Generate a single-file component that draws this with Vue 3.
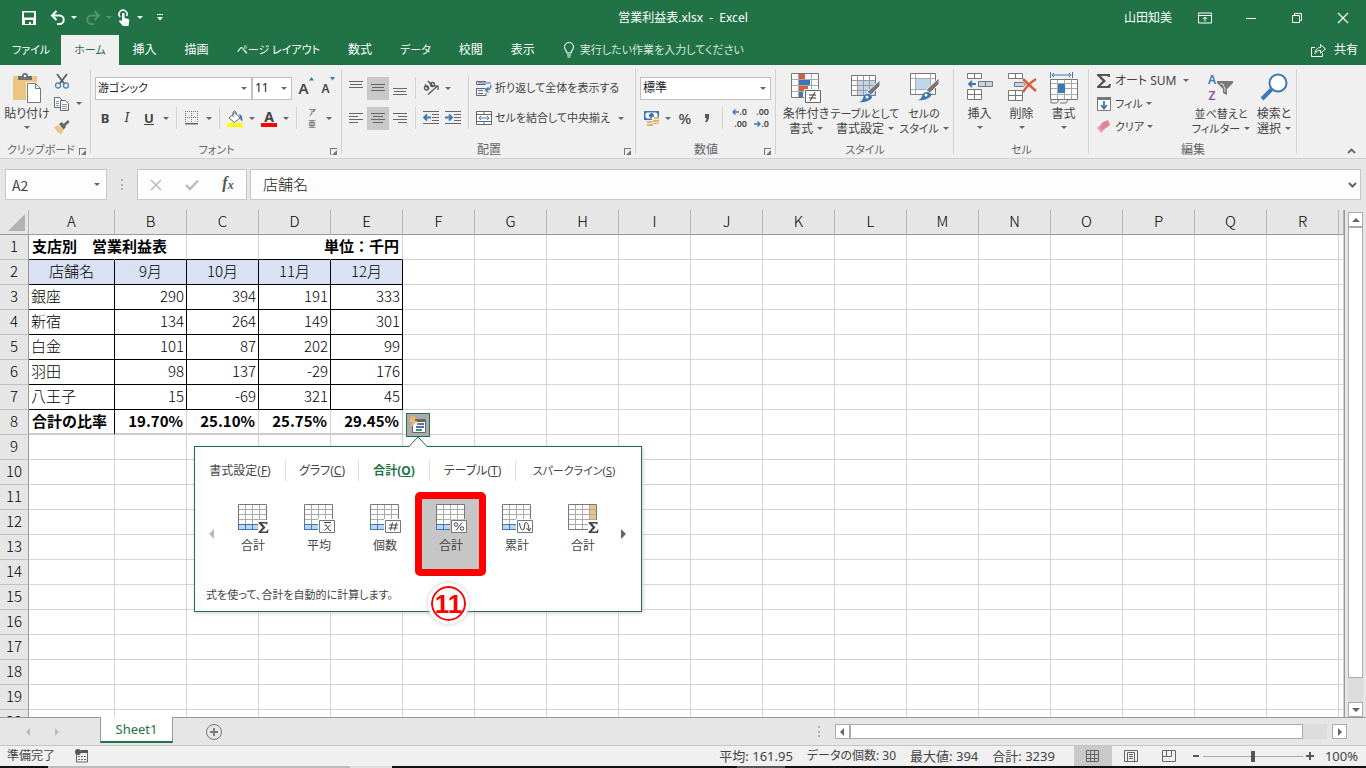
<script setup>
import { ref } from 'vue'

const tabsAfter = [
  { name: '挿入' },
  { name: '描画' },
  { name: 'ページ レイアウト', kana: true },
  { name: '数式' },
  { name: 'データ', kana: true },
  { name: '校閲' },
  { name: '表示' }
]
const columns = 'ABCDEFGHIJKLMNOPQR'.split('')
const rowCount = 20

const cells = {
  1: ['支店別　営業利益表', '', '', '', '単位：千円'],
  2: ['店舗名', '9月', '10月', '11月', '12月'],
  3: ['銀座', '290', '394', '191', '333'],
  4: ['新宿', '134', '264', '149', '301'],
  5: ['白金', '101', '87', '202', '99'],
  6: ['羽田', '98', '137', '-29', '176'],
  7: ['八王子', '15', '-69', '321', '45'],
  8: ['合計の比率', '19.70%', '25.10%', '25.75%', '29.45%']
}

const cellText = (row, col) => (cells[row] && cells[row][col]) || ''
const cellClass = (row, col) => {
  if (row > 8 || col > 4) return ''
  return ['used', `row-${row}`, `col-${col}`, col > 0 ? 'num' : '']
}

const analysisTabs = [
  { name: '書式設定', key: 'F' },
  { name: 'グラフ', key: 'C' },
  { name: '合計', key: 'O', active: true },
  { name: 'テーブル', key: 'T' },
  { name: 'スパークライン', key: 'S' }
]
const analysisItems = [
  { label: '合計', kind: 'sum' },
  { label: '平均', kind: 'avg' },
  { label: '個数', kind: 'count' },
  { label: '合計', kind: 'percent', active: true },
  { label: '累計', kind: 'running' },
  { label: '合計', kind: 'sumcol' }
]
const zoomLevel = ref(50)
const fontName = ref('游ゴシック')
const fontSize = ref('11')
const numberFormat = ref('標準')
const nameBox = ref('A2')
const formula = ref('店舗名')
const stats = [
  { text: '平均: 161.95' },
  { text: 'データの個数: 30', long: true },
  { text: '最大値: 394' },
  { text: '合計: 3239' }
]
</script>

<template>
  <div class="window">
    <header class="titlebar">
      <div class="quick">
        <button aria-label="上書き保存"><svg width="16" height="16" viewBox="0 0 16 16"><path d="M1 1h14v14H1z" fill="#fff"/><path d="M3 2.500h10v5H3zM4 10h8v4h-2v-2H8v2H4z" fill="#217346"/></svg></button>
        <button aria-label="元に戻す" class="undo"><svg width="16" height="16" viewBox="0 0 16 16"><path d="M2 5.500h7.500a4.200 4.200 0 0 1 0 8.500H7" fill="none" stroke="#fff" stroke-width="2"/><path d="M6.500 1L2 5.500 6.500 10" fill="none" stroke="#fff" stroke-width="2"/></svg></button>
        <i class="caret light"></i>
        <button aria-label="やり直し" class="redo"><svg width="16" height="16" viewBox="0 0 16 16"><path d="M14 5.500H6.500a4.200 4.200 0 0 0 0 8.500H9M9.500 1L14 5.500 9.500 10" fill="none" stroke="#569272" stroke-width="2"/></svg></button>
        <i class="caret dim"></i>
        <button aria-label="タッチ/マウス モード" class="touch"><svg width="16" height="18" viewBox="0 0 16 18"><path d="M4.200 8A4 4 0 1 1 10.600 7" fill="none" stroke="#fff" stroke-width="1.600"/><path d="M6 4.500q1.500-1.400 2.500 0V9l4 1q1 .4.800 1.500L12.500 17H7L3 12.500q0-1.500 1.500-1.200L6 12z" fill="#fff"/></svg></button>
        <i class="caret light"></i>
        <button aria-label="クイック アクセス ツール バーのユーザー設定" class="customize"><svg width="8" height="8" viewBox="0 0 8 8"><path d="M1 0h6v1H1zM1 3h6L4 6.500z" fill="#fff"/></svg></button>
      </div>
      <div class="doc-title">営業利益表.xlsx&nbsp; -&nbsp; Excel</div>
      <div class="win-controls">
        <span class="user">山田知美</span>
        <button aria-label="リボンの表示オプション"><svg width="14" height="12" viewBox="0 0 14 12" fill="none" stroke="#fff"><path d="M.5 1h13v10H.5zM.5 3.500h13M7 9.500v-4M5 7l2-2 2 2"/></svg></button>
        <button aria-label="最小化"><svg width="12" height="12" viewBox="0 0 12 12"><path d="M1 6h10v1H1z" fill="#fff"/></svg></button>
        <button aria-label="元に戻す (縮小)"><svg width="12" height="12" viewBox="0 0 12 12" fill="none" stroke="#fff"><path d="M1.500 3.500h7v7h-7zM3.500 3.500v-2h7v7h-2"/></svg></button>
        <button aria-label="閉じる"><svg width="12" height="12" viewBox="0 0 12 12" fill="none" stroke="#fff" stroke-width="1.200"><path d="M1 1l10 10M11 1L1 11"/></svg></button>
      </div>
    </header>

    <nav class="tabs">
      <button class="tab file kana">ファイル</button>
      <button class="tab active kana">ホーム</button>
      <button v-for="t in tabsAfter" :key="t.name" :class="['tab', { kana: t.kana }]">{{ t.name }}</button>
      <button class="tell kana">
        <svg width="12" height="16" viewBox="0 0 12 16" fill="none" stroke="#fff" stroke-width="1.100"><path d="M4 11C4 8.500 1.500 8 1.500 5a4.500 4.500 0 0 1 9 0c0 3-2.500 3.500-2.500 6zM4 13h4M4.500 15h3"/></svg>
        実行したい作業を入力してください
      </button>
      <button class="share">
        <svg width="15" height="14" viewBox="0 0 15 14" fill="none" stroke="#fff"><path d="M4 4.500H.500v9h11V10M4 10.500C4.500 6.500 6.500 4.500 9.500 4.500V1.500l5 4.500-5 4V7.500C7 7.500 5.500 8 4 10.500z"/></svg>
        共有
      </button>
    </nav>

    <section class="ribbon">
      <div class="group clipboard">
        <div class="body">
          <button class="big paste">
            <svg width="30" height="32" viewBox="0 0 30 32"><path d="M1 4h24v24H1z" fill="#ecc581"/><path d="M6 8V4h4q0-3 3-3t3 3h4v4z" fill="#6f6f6f"/><circle cx="13" cy="4" r="1.200" fill="#f0f0f0"/><path d="M14 10h10l6 6v16H14z" fill="#f0f0f0"/><path d="M15.500 11.500h8l5 5v14h-13z" fill="#fff" stroke="#777"/><path d="M23.500 11.500v5h5" fill="none" stroke="#777"/></svg>
            <span>貼り付け</span><i class="caret"></i>
          </button>
          <div class="clip-tools">
            <button class="mini" aria-label="切り取り"><svg width="16" height="16" viewBox="0 0 16 16" fill="none"><path d="M3 1l7.500 10M13 1L5.500 11" stroke="#5c5c5c" stroke-width="1.800"/><circle cx="4" cy="12.500" r="2.500" stroke="#5585bb" stroke-width="1.300"/><circle cx="12" cy="12.500" r="2.500" stroke="#5585bb" stroke-width="1.300"/></svg></button>
            <div class="pair"><button class="mini" aria-label="コピー"><svg width="16" height="16" viewBox="0 0 16 16" fill="#fff" stroke="#666"><path d="M.5 1.500h5l3 3v7h-8z"/><path d="M2 5.500h3M2 7.500h3M2 9.500h3" stroke="#7499c4"/><path d="M6.500 4.500h5l3 3v7h-8z"/><path d="M8 8.500h5M8 10.500h5M8 12.500h5" stroke="#7499c4"/></svg></button><i class="caret"></i></div>
            <button class="mini" aria-label="書式のコピー/貼り付け"><svg width="16" height="16" viewBox="0 0 16 16"><path d="M0 8.500l4-2.500 6 5-3 4.500q-4-2-7-7z" fill="#ecc581"/><path d="M5 5l3-2 4 5-2.500 2.500z" fill="#666"/><path d="M9 5.500l5-4.500L15.500 3l-4.500 4.500z" fill="#666"/></svg></button>
          </div>
        </div>
        <div class="caption kana"><span>クリップボード</span><i class="launcher"></i></div>
      </div>

      <div class="group font">
        <div class="body two-row">
          <div class="line">
            <div class="combo font-name kana"><input v-model="fontName" aria-label="フォント"><i class="caret"></i></div>
            <div class="combo font-size"><input v-model="fontSize" aria-label="フォント サイズ"><i class="caret"></i></div>
            <button class="tool grow" aria-label="フォント サイズの拡大"><b>A</b><svg width="5" height="4" viewBox="0 0 5 4"><path d="M0 3.500L2.500 0 5 3.500z" fill="#3b78b5"/></svg></button>
            <button class="tool shrink" aria-label="フォント サイズの縮小"><b>A</b><svg width="5" height="4" viewBox="0 0 5 4"><path d="M0 0h5L2.500 3.500z" fill="#3b78b5"/></svg></button>
          </div>
          <div class="line">
            <button class="tool bold">B</button>
            <button class="tool italic">I</button>
            <button class="tool underline">U</button><i class="caret wide"></i>
            <i class="sep"></i>
            <button class="tool" aria-label="罫線"><svg width="14" height="14" viewBox="0 0 14 14"><path d="M.5 0v13M6.500 0v13M12.500 0v13M0 .5h13M0 6.500h13" fill="none" stroke="#777" stroke-dasharray="1 1"/><path d="M0 12h13v1.500H0z" fill="#666"/></svg></button><i class="caret wide"></i>
            <i class="sep"></i>
            <button class="tool" aria-label="塗りつぶしの色"><svg width="17" height="17" viewBox="0 0 17 17"><path d="M2 8l6-5.500L13 8l-5.500 4.500z" fill="#fff" stroke="#666"/><path d="M6 7V2q1.500-2.500 3 0v3" fill="none" stroke="#666"/><path d="M12 4q4 1 3.500 7-2 0-2.500-3z" fill="#3b78b5"/><path d="M0 13h16v4H0z" fill="#ff0"/></svg></button><i class="caret wide"></i>
            <button class="tool" aria-label="フォントの色"><span class="color-a">A</span></button><i class="caret wide"></i>
            <i class="sep"></i>
            <button class="tool ruby" aria-label="ふりがなの表示"><span>ア</span><span>亜</span></button><i class="caret wide"></i>
          </div>
        </div>
        <div class="caption kana"><span>フォント</span><i class="launcher"></i></div>
      </div>

      <div class="group align">
        <div class="body">
          <div class="two-row">
            <div class="line">
              <button class="tool" aria-label="上揃え"><svg width="14" height="14" viewBox="0 0 14 14" stroke="#666"><path d="M0 .5h14M1 3.500h12M0 6.500h14"/></svg></button>
              <button class="tool on" aria-label="上下中央揃え"><svg width="14" height="14" viewBox="0 0 14 14" stroke="#666"><path d="M0 3.500h14M1 6.500h12M0 9.500h14"/></svg></button>
              <button class="tool" aria-label="下揃え"><svg width="14" height="14" viewBox="0 0 14 14" stroke="#666"><path d="M0 7.500h14M1 10.500h12M0 13.500h14"/></svg></button>
              <i class="sep"></i>
              <button class="tool" aria-label="方向"><svg width="16" height="16" viewBox="0 0 16 16" fill="none" stroke="#555" stroke-width="1.400"><circle cx="3.500" cy="8" r="2"/><path d="M2 4.500l4 4.500"/><path d="M5 1l5 5.500"/><circle cx="9.500" cy="4.500" r="2"/><path d="M5 14.500L14.500 6M11 6h4v4" stroke-width="1.200"/></svg></button><i class="caret wide"></i>
            </div>
            <div class="line">
              <button class="tool" aria-label="左揃え"><svg width="14" height="12" viewBox="0 0 14 12" stroke="#666"><path d="M0 1.500h14M0 4.500h9M0 7.500h14M0 10.500h9"/></svg></button>
              <button class="tool on" aria-label="中央揃え"><svg width="14" height="12" viewBox="0 0 14 12" stroke="#666"><path d="M0 1.500h14M2 4.500h10M0 7.500h14M2 10.500h10"/></svg></button>
              <button class="tool" aria-label="右揃え"><svg width="14" height="12" viewBox="0 0 14 12" stroke="#666"><path d="M0 1.500h14M5 4.500h9M0 7.500h14M5 10.500h9"/></svg></button>
              <i class="sep"></i>
              <button class="tool" aria-label="インデントを減らす"><svg width="16" height="14" viewBox="0 0 16 14" fill="none" stroke="#666"><path d="M0 .5h16M9 3.500h7M9 6.500h7M9 9.500h7M0 12.500h16"/><path d="M8 6.500H1M4 3.500l-3 3 3 3" stroke="#3b78b5" stroke-width="1.800"/></svg></button>
              <button class="tool" aria-label="インデントを増やす"><svg width="16" height="14" viewBox="0 0 16 14" fill="none" stroke="#666"><path d="M0 .5h16M9 3.500h7M9 6.500h7M9 9.500h7M0 12.500h16"/><path d="M0 6.500h7M4 3.500l3 3-3 3" stroke="#3b78b5" stroke-width="1.800"/></svg></button>
            </div>
          </div>
          <i class="sep tall"></i>
          <div class="two-row">
            <button class="line text-tool kana"><svg width="16" height="16" viewBox="0 0 16 16" fill="none" stroke="#666"><path d="M10 1.500H.500v3h9M.5 8.500h9M.5 8v7.500h9.500V13M2 13.500h5"/><path d="M2 3h13M2 10.500h5" stroke="#3b78b5"/><path d="M15 5q0 5-5 5M12.500 7.500L9.500 10l3 2.500" stroke="#3b78b5" stroke-width="1.400"/></svg><span>折り返して全体を表示する</span></button>
            <button class="line text-tool kana"><svg width="16" height="16" viewBox="0 0 16 16" fill="none" stroke="#666"><path d="M.5 1.500h15v13H.5zM.5 4.500h15M.5 11.500h15M8 1v3M8 12v3" fill="#fff"/><path d="M3 8h10M5 6L3 8l2 2M11 6l2 2-2 2" stroke="#3b78b5"/></svg><span>セルを結合して中央揃え</span><i class="caret wide"></i></button>
          </div>
        </div>
        <div class="caption"><span>配置</span><i class="launcher"></i></div>
      </div>

      <div class="group number">
        <div class="body two-row">
          <div class="line"><div class="combo number-format"><input v-model="numberFormat" aria-label="表示形式"><i class="caret"></i></div></div>
          <div class="line">
            <button class="tool" aria-label="通貨表示形式"><svg width="17" height="17" viewBox="0 0 17 17"><path d="M1 1h15v9H1z" fill="#3b78b5"/><path d="M4 2.500h9L14.500 4v3L13 8.500H4L2.500 7V4z" fill="#fff"/><circle cx="8.500" cy="5.500" r="2.500" fill="#3b78b5"/><path d="M9 7h8v9H9z" fill="#f0f0f0"/><path d="M11 7h5v2h-5zM10 10h6v2h-6zM4 11h5v2H4zM4 14h6v2H4zM10 13h6v1h-6z" fill="#e3b368"/></svg></button><i class="caret wide"></i>
            <button class="tool percent">%</button>
            <button class="tool comma" aria-label="桁区切りスタイル"><svg width="6" height="9" viewBox="0 0 6 9"><path d="M1 0h4v4Q4.500 7 2 8.500L1 7.500Q2.500 6.500 2.500 4H1z" fill="#555"/></svg></button>
            <i class="sep"></i>
            <button class="tool digits" aria-label="小数点以下の表示桁数を増やす"><span><svg width="7" height="6" viewBox="0 0 7 6"><path d="M7 3H1M3.500.5L1 3l2.500 2.500" fill="none" stroke="#3b78b5" stroke-width="1.400"/></svg>.0</span><span>.00</span></button>
            <button class="tool digits" aria-label="小数点以下の表示桁数を減らす"><span>.00</span><span><svg width="7" height="6" viewBox="0 0 7 6"><path d="M0 3h6M3.500.5L6 3 3.500 5.500" fill="none" stroke="#3b78b5" stroke-width="1.400"/></svg>.0</span></button>
          </div>
        </div>
        <div class="caption"><span>数値</span><i class="launcher"></i></div>
      </div>

      <div class="group styles">
        <div class="body">
          <button class="big"><svg width="32" height="32" viewBox="0 0 32 32"><path d="M1.500 1.500h27v24h-27z" fill="#fff" stroke="#777"/><path d="M2 7.500h26M2 13.500h26M2 19.500h26M8.500 2v23M21.500 2v23" stroke="#aaa"/><path d="M9 2h6v5H9zM9 14h9v5H9z" fill="#d65f3d"/><path d="M9 8h11v5H9zM9 20h4v5H9z" fill="#3b78b5"/><path d="M14 17h18v15H14z" fill="#f0f0f0"/><path d="M15.500 18.500h15v12h-15z" fill="#fff" stroke="#666"/><path d="M19 23h7M19 26h7M25 20l-5 9" stroke="#333"/></svg><span>条件付き</span><span>書式<i class="caret"></i></span></button>
          <button class="big mid"><svg width="32" height="32" viewBox="0 0 32 32"><path d="M2.500 3.500h24v20h-24z" fill="#fff" stroke="#777"/><path d="M9 9h17v14H9z" fill="#c1d6ec"/><path d="M3 8.500h23M3 13.500h23M3 18.500h23M8.500 4v19M14.500 4v19M20.500 4v19" stroke="#999" fill="none"/><path d="M31 8v6L22 23l-4-3z" fill="#777" stroke="#f0f0f0"/><path d="M9 30q4 0 5-4t5-4 4 4q-4 5-14 4z" fill="#3b78b5"/><circle cx="18" cy="25" r="1.500" fill="#fff"/></svg><span class="kana">テーブルとして</span><span>書式設定<i class="caret"></i></span></button>
          <button class="big"><svg width="32" height="32" viewBox="0 0 32 32"><path d="M2.500 1.500h25v21h-25z" fill="#fff" stroke="#777"/><path d="M7.500 2v20M22.500 2v20M3 6.500h24M3 17.500h24" stroke="#aaa"/><path d="M8 7h14v10H8z" fill="#c1d6ec"/><path d="M31 6v6l-9 9-4-3z" fill="#777" stroke="#f0f0f0"/><path d="M9 28q4 0 5-4t5-4 4 4q-4 5-14 4z" fill="#3b78b5"/><circle cx="18" cy="23" r="1.500" fill="#fff"/></svg><span class="kana">セルの</span><span class="kana">スタイル<i class="caret"></i></span></button>
        </div>
        <div class="caption kana"><span>スタイル</span></div>
      </div>

      <div class="group cell-tools">
        <div class="body">
          <button class="big"><svg width="28" height="32" viewBox="0 0 28 32" fill="#fff" stroke="#777"><path d="M1.500 1.500h14v5h-14zM8.500 1.500v5M1.500 17.500h14v10h-14zM8.500 17.500v10M1.500 22.500h14"/><path d="M12.500 9.500h14v5h-14zM19.500 9.500v5" fill="#c1d6ec"/><path d="M10 12H3M6 9l-3 3 3 3" fill="none" stroke="#3b78b5" stroke-width="1.800"/></svg><span>挿入</span><i class="caret"></i></button>
          <button class="big"><svg width="30" height="32" viewBox="0 0 30 32" fill="#fff" stroke="#777"><path d="M1.500 1.500h14v5h-14zM8.500 1.500v5M1.500 18.500h14v10h-14zM8.500 18.500v10M1.500 23.500h14"/><path d="M7.500 10.500h9l2 2-2 2h-9z" fill="#c1d6ec"/><path d="M16 7q6 6 13 12M29 7q-8 5-13 13" fill="none" stroke="#d65f3d" stroke-width="2.500"/></svg><span>削除</span><i class="caret"></i></button>
          <button class="big"><svg width="30" height="32" viewBox="0 0 30 32" fill="none" stroke="#777"><path d="M1.500 7.500h27v20h-27z" fill="#fff"/><path d="M2 11.500h26M2 22.500h26M8.500 8v19M15.500 8v19M22.500 8v19M2 16.500h26" stroke="#aaa"/><path d="M9 12h7v9H9z" fill="#3b78b5" stroke="none"/><path d="M1.500 0v6M23.500 0v6M3 3h19M5 1L3 3l2 2M20 1l2 2-2 2" stroke="#3b78b5"/><path d="M2 28v3h6l2-3M11 31h6l2-3"/></svg><span>書式</span><i class="caret"></i></button>
        </div>
        <div class="caption kana"><span>セル</span></div>
      </div>

      <div class="group edit">
        <div class="body">
          <div class="edit-tools">
            <button><svg width="16" height="16" viewBox="0 0 16 16"><path d="M1 1h13v3h-1.500Q12 3 10.500 3H5l5 5-5.500 5H11q1.500 0 2-2H15l-.8 4H1v-1.500L6.500 8 1 2.500z" fill="#555"/></svg><span>オート SUM</span><i class="caret auto"></i></button>
            <button class="kana"><svg width="16" height="16" viewBox="0 0 16 16"><path d="M1.500 1.500h13v13h-13z" fill="#fff" stroke="#777"/><path d="M1 1h14v3H1z" fill="#777"/><path d="M8 5v7M5 9l3 3.500L11 9" fill="none" stroke="#3b78b5" stroke-width="1.800"/></svg><span>フィル</span><i class="caret"></i></button>
            <button class="kana"><svg width="16" height="16" viewBox="0 0 16 16"><path d="M7 3l5-2 2 5-8 6-4-3z" fill="#e58298"/><path d="M1 9l4 5 2-2-4-5z" fill="#e9a0ae"/></svg><span>クリア</span><i class="caret"></i></button>
          </div>
          <button class="big sort kana"><span class="sort-icon"><span class="az"><b>A</b><b>Z</b></span><svg width="18" height="18" viewBox="0 0 18 18"><path d="M1 2h16v2l-6 6v6l-4-2v-4L1 4z" fill="#777"/><path d="M4 5h3l2 5v3" stroke="#ddd" fill="none"/></svg></span><span>並べ替えと</span><span>フィルター<i class="caret"></i></span></button>
          <button class="big find"><svg width="30" height="32" viewBox="0 0 30 32" fill="none" stroke="#3b78b5"><circle cx="19" cy="11" r="8.500" stroke-width="2" fill="#fff"/><path d="M12.500 17.500L3 27" stroke-width="4"/></svg><span>検索と</span><span>選択<i class="caret"></i></span></button>
        </div>
        <div class="caption"><span>編集</span></div>
      </div>
      <button class="collapse" aria-label="リボンを折りたたむ"><svg width="9" height="6" viewBox="0 0 9 6"><path d="M1 5l3.500-3.500L8 5" fill="none" stroke="#666" stroke-width="1.800"/></svg></button>
    </section>

    <section class="formula-bar">
      <div class="name-box"><input v-model="nameBox" aria-label="名前ボックス"><i class="caret"></i></div>
      <i class="dots"></i>
      <div class="fx">
        <button aria-label="キャンセル"><svg width="12" height="12" viewBox="0 0 12 12"><path d="M1 1l10 10M11 1L1 11" stroke="#bbb" stroke-width="1.600"/></svg></button>
        <button aria-label="入力"><svg width="14" height="12" viewBox="0 0 14 12"><path d="M1 6l4 4 8-8.500" fill="none" stroke="#bbb" stroke-width="2.400"/></svg></button>
        <button class="fn" aria-label="関数の挿入">f<small>x</small></button>
      </div>
      <div class="formula"><input v-model="formula" aria-label="数式バー"><svg width="9" height="6" viewBox="0 0 9 6"><path d="M1 1l3.500 3.500L8 1" fill="none" stroke="#666" stroke-width="2"/></svg></div>
    </section>

    <main class="workspace">
      <div class="sheet">
        <table>
          <colgroup><col class="c-head"><col class="c-a"><col v-for="n in 17" :key="n" class="c-n"><col></colgroup>
          <thead><tr><th class="corner"><svg width="17" height="17" viewBox="0 0 17 17"><path d="M17 0v17H0z" fill="#b2b2b2"/></svg></th><th v-for="c in columns" :key="c">{{ c }}</th><th></th></tr></thead>
          <tbody>
            <tr v-for="r in rowCount" :key="r">
              <th>{{ r }}</th>
              <td v-for="(c, i) in columns" :key="c" :class="cellClass(r, i)"><span v-if="cellText(r, i)">{{ cellText(r, i) }}</span></td>
              <td></td>
            </tr>
          </tbody>
        </table>

        <button class="quick-analysis" aria-label="クイック分析"><svg width="20" height="20" viewBox="0 0 20 20"><path d="M4.500 4.500h13v13h-13z" fill="#fff" stroke="#666"/><path d="M7 4h10v3H7z" fill="#666"/><path d="M9 9h3" stroke="#d65f3d" stroke-width="2"/><path d="M12 9h4M8 12h8" stroke="#3b78b5" stroke-width="2"/><path d="M8 15h6" stroke="#3f9270" stroke-width="2"/><path d="M3 1h5L6.500 6H9l-7 7 1.500-6H1z" fill="#e8b96f" stroke="#ababab" stroke-width=".5"/></svg></button>

        <div class="popup">
          <svg class="beak" width="20" height="11" viewBox="0 0 20 11"><path d="M1 11L10 1l9 10z" fill="#fff"/><path d="M1 10.500L10 1l9 9.500" fill="none" stroke="#217346"/></svg>
          <div class="a-tabs">
            <button v-for="t in analysisTabs" :key="t.key" :class="['a-tab', 'tab-' + t.key, { active: t.active }]">{{ t.name }}(<u>{{ t.key }}</u>)</button>
          </div>
          <div class="a-items">
            <button class="nav" aria-label="前へ"><svg width="6" height="10" viewBox="0 0 6 10"><path d="M6 0v10L1 5z" fill="#bbb"/></svg></button>
            <button v-for="(it, i) in analysisItems" :key="i" :class="['a-item', { active: it.active }]">
              <svg width="32" height="32" viewBox="0 0 32 32">
                <path d="M1.500 2.500h28v25H1.500z" fill="#fff"/>
                <path v-if="it.kind !== 'sumcol'" d="M2 22h27v5H2z" fill="#bdd5ee"/>
                <path v-else d="M23 3h6v24h-6z" fill="#ecc581"/>
                <path d="M2 7.500h27M2 12.500h27M2 17.500h27M8.500 3v24M15.500 3v24M22.500 3v24" stroke="#aaa"/>
                <path d="M1.500 27.500v-25h28v25z" fill="none" stroke="#777"/>
                <path v-if="it.kind !== 'sumcol'" d="M1.500 22.500h28v5H1.500zM8.500 22v5M15.500 22v5" fill="none" stroke="#3b78b5"/>
                <path v-else d="M2 22.500h27" stroke="#aaa"/>
                <g v-if="it.kind === 'sum' || it.kind === 'sumcol'"><path d="M21 18h11v14H21z" fill="#fff"/><path d="M21.500 20h9v2.500h-1q0-1-1.500-1h-3l3.500 4-4 4H29q1 0 1.500-2h1L31 31h-9.500v-1l4-4.500-4-4.500z" fill="#444"/></g>
                <g v-else fill="none" stroke="#444"><path d="M15 17h17v15H15z" :fill="it.active ? '#c6c6c6' : '#fff'" stroke="none"/><path d="M16.500 18.500h15v12h-15z" fill="#fff" stroke="#777"/>
                  <path v-if="it.kind === 'avg'" d="M21 20.500h7M21.500 23H23l3.500 5.500H28M27.500 23l-6 5.500"/>
                  <path v-else-if="it.kind === 'count'" d="M23.500 20.500l-2 8M27.500 20.500l-2 8M20 23h9M19.500 26h9"/>
                  <g v-else-if="it.kind === 'percent'"><circle cx="21" cy="22.500" r="1.800"/><circle cx="27" cy="26.500" r="1.800"/><path d="M27 20.500l-6 8"/></g>
                  <path v-else d="M18.500 21q1 7 3 7t2-4q0-4 2-3.500t2.500 7.500M25.500 26l2.500 3 2-3"/>
                </g>
              </svg>
              <span>{{ it.label }}</span>
            </button>
            <button class="nav next" aria-label="次へ"><svg width="6" height="10" viewBox="0 0 6 10"><path d="M0 0v10l5-5z" fill="#666"/></svg></button>
          </div>
          <p class="kana">式を使って、合計を自動的に計算します。</p>
          <div class="marker-frame"></div>
          <div class="marker-number">11</div>
        </div>
      </div>
      <div class="vscroll">
        <button aria-label="上へスクロール"><i class="tri up"></i></button>
        <div class="vthumb"></div><div class="vtrack"></div>
        <button aria-label="下へスクロール"><i class="tri down"></i></button>
      </div>
    </main>

    <section class="sheet-bar">
      <div class="sheet-nav"><i class="tri left"></i><i class="tri right"></i></div>
      <button class="sheet-tab">Sheet1</button>
      <button class="add" aria-label="新しいシート"><svg width="18" height="18" viewBox="0 0 18 18" fill="none" stroke="#777"><circle cx="9" cy="9" r="7.500"/><path d="M5 9h8M9 5v8" stroke-width="1.800"/></svg></button>
      <i class="dots"></i>
      <div class="hscroll">
        <button aria-label="左へスクロール"><i class="tri left"></i></button>
        <div class="hthumb"></div><div class="htrack"></div>
        <button class="last" aria-label="右へスクロール"><i class="tri right"></i></button>
      </div>
    </section>

    <footer class="status">
      <span>準備完了</span>
      <svg class="macro" width="14" height="14" viewBox="0 0 14 14"><path d="M1.500 4v9h11V4" fill="none" stroke="#666"/><path d="M6 1h7v3H6z" fill="#555"/><circle cx="3" cy="3" r="3" fill="#555"/><path d="M3 7.500h8M3 10.500h8" stroke="#666" stroke-dasharray="2 1"/></svg>
      <div class="stats"><span v-for="s in stats" :key="s.text" :class="{ long: s.long }">{{ s.text }}</span></div>
      <div class="views">
        <button class="on" aria-label="標準"><svg width="14" height="14" viewBox="0 0 14 14" fill="none" stroke="#666"><path d="M.5 1.500h12v11H.500zM.5 5.500h12M.5 9.500h12M4.500 1.500v11M8.500 1.500v11"/></svg></button>
        <button aria-label="ページ レイアウト"><svg width="14" height="14" viewBox="0 0 14 14" fill="none" stroke="#666"><path d="M.5 1.500h13v11H.500zM3.500 3.500h7v9h-7zM5 5.500h4M5 7.500h4M5 9.500h4"/></svg></button>
        <button aria-label="改ページ プレビュー"><svg width="14" height="14" viewBox="0 0 14 14" fill="none" stroke="#666"><path d="M.5 1.500h13v11H.500zM4.500 1.500v6h5v-6M.5 7.500h4M9.500 1.500v4"/></svg></button>
      </div>
      <div class="zoom">
        <button aria-label="縮小"><svg width="8" height="8" viewBox="0 0 8 8"><path d="M1 3h6v2H1z" fill="#555"/></svg></button>
        <input v-model="zoomLevel" type="range" min="0" max="100" aria-label="ズーム">
        <button aria-label="拡大"><svg width="8" height="8" viewBox="0 0 8 8"><path d="M0 3h3V0h2v3h3v2H5v3H3V5H0z" fill="#555"/></svg></button>
        <span>100%</span>
      </div>
    </footer>
    <div class="edge"></div>
  </div>
</template>

<style>
html, body { background: #e6e6e6; }
</style>

<style scoped>
.window { height: 100vh; display: flex; flex-direction: column; overflow: hidden; background: #e6e6e6; color: #444; font: 12px/16px "Noto Sans", "Noto Sans CJK JP", sans-serif; font-feature-settings: "palt"; }
.window * { box-sizing: border-box; }
button { font: inherit; font-feature-settings: inherit; color: inherit; background: none; border: 0; padding: 0; margin: 0; white-space: nowrap; }
input { font: inherit; font-feature-settings: inherit; color: inherit; border: 0; padding: 0; margin: 0; background: none; min-width: 0; outline: 0; }
.kana { font-size: 11px; }
svg { display: block; flex: none; }
i { display: block; flex: none; font-style: normal; }
.caret { width: 6px; height: 3px; border: solid transparent; border-width: 3px 3px 0; border-top-color: #666; }
.caret.light { border-top-color: #fff; }
.caret.dim { border-top-color: #569272; }
.caret.wide { margin: 0 3px; }
.sep { width: 1px; height: 22px; background: #d2d2d2; margin: 0 4px; }

.titlebar { height: 35px; flex: none; background: #217346; color: #fff; display: grid; grid-template-columns: 1fr auto 1fr; align-items: center; }
.quick { display: flex; align-items: center; padding-left: 21px; height: 32px; }
.undo { margin-left: 13px; }
.quick .caret { margin-left: 5px; }
.redo { margin-left: 8px; }
.touch { margin-left: 4px; }
.customize { margin-left: 13px; }
.doc-title { line-height: 32px; }
.win-controls { display: flex; align-items: center; justify-content: flex-end; height: 32px; }
.win-controls button { width: 46px; height: 30px; display: flex; align-items: center; justify-content: center; }
.user { margin-right: 10px; }

.tabs { height: 30px; flex: none; background: #217346; color: #fff; display: flex; }
.tab { padding: 0 14px; }
.tab.file { padding: 0 11px 0 12px; }
.tab.active { padding: 0 13px; background: #f0f0f0; color: #217346; }
.tell { display: flex; align-items: center; gap: 5px; margin-left: 14px; color: #d9e8df; }
.share { display: flex; align-items: center; gap: 8px; margin-left: auto; padding-right: 8px; }

.ribbon { flex: none; height: 94px; background: #f0f0f0; border-bottom: 1px solid #d2d2d2; display: flex; padding-top: 4px; }
.group { display: flex; flex-direction: column; position: relative; flex: none; }
.group::after { content: ""; position: absolute; right: 0; top: 0; bottom: 4px; width: 1px; background: #d2d2d2; }
.body { height: 71px; display: flex; flex: none; }
.caption { height: 18px; padding-top: 2px; display: flex; align-items: center; justify-content: center; color: #666; position: relative; }
.launcher { position: absolute; right: 5px; top: 8px; width: 7px; height: 7px; border-left: 1px solid #777; border-top: 1px solid #777; }
.launcher::after { content: ""; position: absolute; right: 0; bottom: 0; border: solid transparent; border-width: 0 0 5px 5px; border-bottom-color: #777; }
.clipboard { width: 91px; }
.clipboard .caption { justify-content: flex-start; padding-left: 7px; }
.font { width: 251px; }
.align { width: 294px; }
.number { width: 140px; }
.styles { width: 178px; }
.cell-tools { width: 135px; }
.edit { width: 208px; }
.styles .body, .cell-tools .body { justify-content: center; }
.body.two-row, .body .two-row { flex-direction: column; }
.two-row { display: flex; padding-top: 4px; padding-left: 3px; }
.line { height: 30px; display: flex; align-items: center; }
.body.two-row .line:first-child { padding-left: 1px; }
.tool { width: 22px; height: 23px; display: flex; align-items: center; justify-content: center; flex: none; }
.tool.on { background: #c8c8c8; }
.combo { height: 23px; background: #fff; border: 1px solid #c0c0c0; display: flex; align-items: center; padding: 0 4px 0 2px; color: #222; }
.combo input { flex: 1; width: 0; }
.font-name { width: 157px; }
.font-size { width: 40px; margin-right: 3px; }
.number-format { width: 131px; }
.number .line { padding-left: 1px; }
.grow, .shrink { align-items: flex-start; }
.grow b { font-size: 15px; line-height: 22px; font-weight: 600; }
.shrink b { font-size: 12px; line-height: 24px; font-weight: 600; }
.bold { font-weight: 700; font-size: 13px; }
.italic { font-style: italic; font-size: 13px; font-family: "DejaVu Serif", serif; }
.underline { font-weight: 700; font-size: 13px; text-decoration: underline; }
.color-a { font-weight: 700; font-size: 14px; line-height: 13px; border-bottom: 4px solid #f00; width: 16px; text-align: center; }
.ruby { flex-direction: column; font-size: 8px; line-height: 12px; }
.percent { font-size: 15px; font-weight: 500; }
.digits { flex-direction: column; font-size: 9px; line-height: 12px; font-weight: 600; }
.digits span { display: flex; align-items: center; justify-content: flex-end; width: 18px; }
.sep.tall { height: 54px; margin: 6px 4px 0 4px; }
.align .two-row + .sep + .two-row { padding-left: 3px; }
.text-tool span { margin-left: 3px; }
.text-tool .caret { margin-left: 8px; }

.big { width: 50px; padding-top: 3px; display: flex; flex-direction: column; align-items: center; line-height: 15px; flex: none; }
.big > svg { margin-bottom: 2px; }
.big > span { display: flex; align-items: center; }
.big > span .caret { margin-left: 4px; }
.big > .caret { margin-top: 5px; }
.big.mid { width: 68px; }
.cell-tools .big { width: 42px; }
.paste { width: 54px; }
.clip-tools { display: flex; flex-direction: column; }
.mini { height: 23px; display: flex; align-items: center; }
.pair { display: flex; align-items: center; }
.pair .caret { margin-left: 6px; }
.edit-tools { display: flex; flex-direction: column; width: 98px; padding-left: 7px; }
.edit-tools button { display: flex; align-items: center; height: 23px; gap: 3px; }
.edit-tools .auto { margin-left: 4px; }
.big.sort { width: 68px; }
.big.find { width: 38px; }
.big .sort-icon { height: 32px; margin-bottom: 2px; }
.az { display: flex; flex-direction: column; line-height: 16px; font-size: 12px; color: #3b78b5; }
.az b { font-weight: 600; }
.az b + b { color: #8a4fb0; }
.collapse { margin: auto 10px 4px auto; }

.formula-bar { flex: none; display: flex; padding: 10px 5px; height: 51px; }
.formula-bar > div { height: 31px; background: #fdfdfd; border: 1px solid #c6c6c6; display: flex; align-items: center; }
.name-box { width: 102px; padding: 0 6px; font-size: 14px; }
.name-box input { flex: 1; font-family: "Noto Sans CJK JP", sans-serif; }
.dots { width: 2px; height: 11px; border-top: 2px solid #b0b0b0; border-bottom: 2px solid #b0b0b0; position: relative; align-self: center; }
.dots::after { content: ""; position: absolute; left: 0; top: 3px; width: 2px; height: 2px; background: #b0b0b0; }
.formula-bar .dots { margin: 0 14px; }
.fx { width: 110px; }
.fx button { flex: 1; display: flex; justify-content: center; }
.fn { font: italic 700 16px/16px "Liberation Serif", serif; color: #555; }
.fn small { font-size: 12px; line-height: 20px; }
.formula { flex: 1; margin-left: 3px; padding: 0 3px 0 12px; }
.formula input { flex: 1; font: 300 15px/20px "Noto Sans CJK JP", sans-serif; font-feature-settings: normal; color: #222; padding-bottom: 2px; }

.workspace { flex: 1; min-height: 0; display: flex; }
.sheet { flex: 1; min-width: 0; overflow: hidden; position: relative; background: #fff; border-right: 1px solid #999; }
table { width: 100%; table-layout: fixed; border-collapse: separate; border-spacing: 0; font: 300 15px/20px "Noto Sans CJK JP", sans-serif; font-feature-settings: normal; color: #000; }
.c-head { width: 29px; }
.c-a { width: 86px; }
.c-n { width: 72px; }
th { background: #e6e6e6; font-weight: 300; padding: 0; height: 25px; border-right: 1px solid #b4b4b4; border-bottom: 1px solid #999; text-align: center; color: #000; }
thead th { padding-bottom: 2px; }
tbody th { border-right-color: #999; border-bottom-color: #c0c0c0; padding-bottom: 2px; }
.corner svg { margin: 3px 0 0 8px; }
td { height: 25px; padding: 0 2px 2px; border-right: 1px solid #d4d4d4; border-bottom: 1px solid #d4d4d4; white-space: nowrap; }
.num { text-align: right; }
.row-1, .row-8 { font-weight: 700; padding: 0 3px 2px; }
.used { border-color: #000; }
.row-1 { border-right-color: #d4d4d4; }
.row-1.col-0, .row-1.col-3 { border-right-color: transparent; }
.row-1.col-4 span { display: flex; justify-content: flex-end; }
.row-2 { background: #d9e1f2; text-align: center; }
.row-8 { border-color: #d4d4d4; border-bottom: 2px solid #ccc; padding-bottom: 1px; }
.row-8.col-0 { border-right-color: #000; }
.row-8.col-4 { border-right-color: #c4c4c4; }

.quick-analysis { position: absolute; left: 406px; top: 203px; width: 24px; height: 24px; background: #ababab; border: 1px solid #217346; display: flex; align-items: center; justify-content: center; }
.popup { position: absolute; left: 194px; top: 236px; width: 448px; height: 166px; background: #fff; border: 1px solid #217346; display: flex; flex-direction: column; box-shadow: 1px 1px 4px #ccc; }
.beak { position: absolute; left: 213px; top: -11px; }
.a-tabs { display: flex; padding-top: 14px; }
.a-tab { height: 20px; border-right: 1px solid #ddd; }
.a-tab:last-child { border: 0; }
.a-tab.active { color: #217346; font-weight: 700; }
.tab-F { width: 91px; }
.tab-C { width: 73px; }
.tab-O { width: 71px; }
.tab-T { width: 86px; }
.tab-S { width: 116px; font-size: 11px; }
.a-items { display: flex; margin-top: 18px; padding-left: 13px; }
.nav { width: 12px; height: 70px; }
.nav.next { padding-left: 5px; }
.a-item { width: 66px; height: 73px; display: flex; flex-direction: column; align-items: center; padding-top: 3px; gap: 4px; }
.a-item.active { background: #c6c6c6; }
.popup p { margin: auto 0 8px 11px; }
.marker-frame { position: absolute; left: 220px; top: 45px; width: 71px; height: 84px; border: 7px solid #f00; border-radius: 5px; }
.marker-number { position: absolute; left: 236px; top: 139px; width: 35px; height: 35px; border: 2px solid #f00; border-radius: 50%; background: #fff; outline: 3px solid #fff; color: #f00; text-align: center; font: 700 26px/32px "Liberation Sans", sans-serif; box-shadow: 0 0 5px 3px #ccc; }

.vscroll { width: 21px; flex: none; padding: 2px 3px 0; display: flex; flex-direction: column; }
.vscroll button, .hscroll button { width: 15px; height: 15px; background: #fff; border: 1px solid #ababab; display: flex; align-items: center; justify-content: center; flex: none; }
.vthumb { flex: 19; background: #fff; border: 1px solid #ababab; }
.vtrack { flex: 1; background: #dcdcdc; }
.tri { border: solid transparent; }
.tri.up { border-width: 0 4px 4px; border-bottom-color: #666; }
.tri.down { border-width: 4px 4px 0; border-top-color: #666; }
.tri.left { border-width: 4px 4px 4px 0; border-right-color: #666; }
.tri.right { border-width: 4px 0 4px 4px; border-left-color: #666; }

.sheet-bar { flex: none; height: 28px; display: flex; align-items: center; border-top: 1px solid #999; }
.sheet-nav { width: 100px; display: flex; gap: 25px; padding-left: 26px; }
.sheet-nav .left { border-right-color: #bbb; }
.sheet-nav .right { border-left-color: #bbb; }
.sheet-tab { width: 73px; height: 26px; align-self: flex-start; margin-top: -1px; background: #fff; border: 1px solid #999; border-width: 0 1px; border-bottom: 2px solid #217346; color: #217346; font-size: 13px; }
.add { margin-left: 32px; }
.sheet-bar .dots { margin-left: auto; margin-right: 15px; }
.hscroll { width: 37.5%; display: flex; margin-right: 19px; }
.hthumb { flex: 19; border: 1px solid #ababab; background: #fff; }
.htrack { flex: 1; background: #dcdcdc; }
.hscroll .last { margin-left: 5px; }

.status { flex: none; height: 21px; border-top: 1px solid #c6c6c6; background: #f0f0f0; display: flex; align-items: center; padding-left: 7px; }
.macro { margin-left: 20px; }
.stats { margin-left: auto; display: flex; gap: 14px; font-size: 13px; }
.stats .long { font-size: 12px; }
.views { display: flex; margin-left: 19px; align-self: stretch; }
.views button { width: 38px; display: flex; align-items: center; justify-content: center; }
.views .on { background: #c9c9c9; }
.zoom { display: flex; align-items: center; margin-left: 4px; padding-right: 8px; }
.zoom input { appearance: none; width: 100px; height: 12px; margin: 0 3px; background: linear-gradient(#aaa, #aaa) center / 100% 1px no-repeat; }
.zoom input::-webkit-slider-thumb { appearance: none; width: 4px; height: 11px; background: #555; }
.zoom span { margin-left: 11px; font-size: 13px; }
.edge { flex: none; height: 2px; background: linear-gradient(90deg, #111 48px, #bbb 48px 350px, #ddd 350px 392px, #111 392px 737px, #555 737px 785px, #111 785px); }
</style>
